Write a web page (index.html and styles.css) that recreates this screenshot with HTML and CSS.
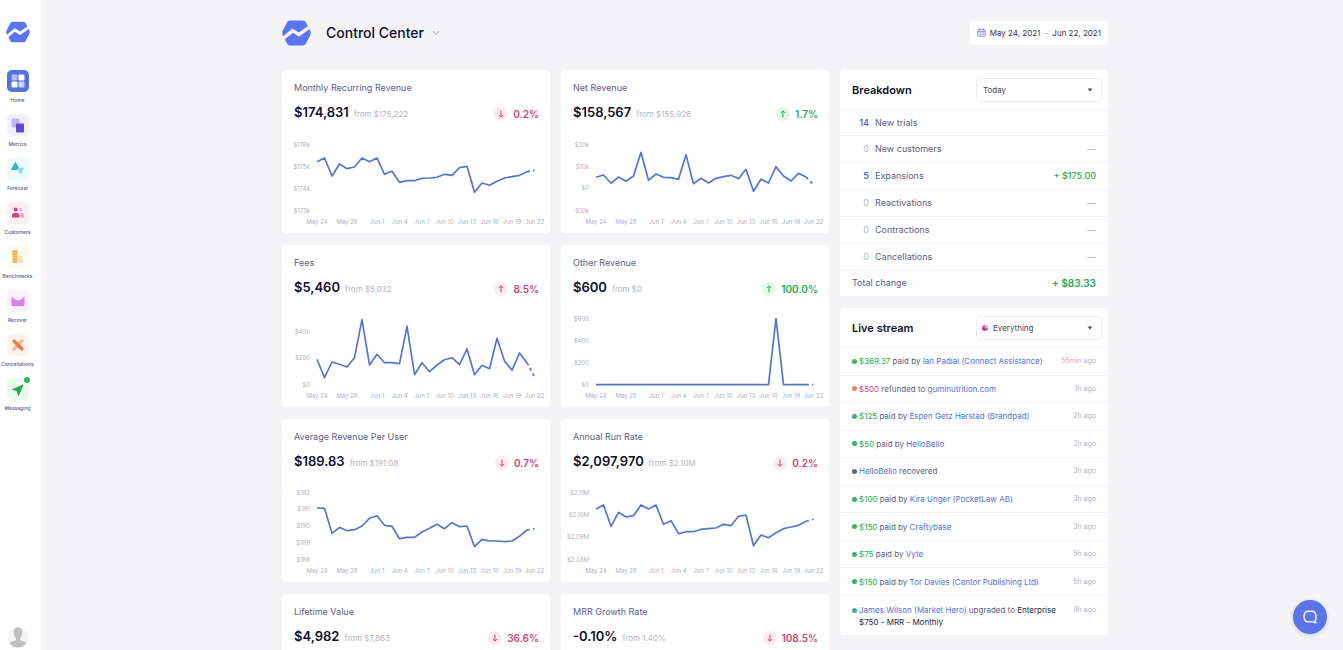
FILE: index.html
```html
<!DOCTYPE html>
<html lang="en">
<head>
<meta charset="utf-8">
<title>Control Center</title>
<link rel="stylesheet" href="styles.css">
</head>
<body>
<svg class="defs" aria-hidden="true">
  <symbol id="logo" viewBox="0 0 28 25">
    <path d="M8 2.500h12q1 0 1.500.900l4 7.900q.6 1.200 0 2.400l-4 7.900q-.5.900-1.500.900H8q-1 0-1.500-.900l-4-7.900q-.6-1.200 0-2.400l4-7.900q.5-.900 1.500-.900z" fill="#5b75f0" stroke="#5b75f0" stroke-width="4" stroke-linejoin="round"/>
    <path d="M-1 19.500 10.300 10.200 16.300 14 29.500 4.600" fill="none" stroke="var(--cut)" stroke-width="3.300" stroke-linejoin="round"/>
  </symbol>
  <symbol id="down" viewBox="0 0 14 14"><path d="M7 3.500v6.500M4.800 8 7 10.200 9.200 8" fill="none" stroke="currentColor" stroke-width="1"/></symbol>
  <symbol id="up" viewBox="0 0 14 14"><path d="M7 10.500V4M4.800 6 7 3.800 9.200 6" fill="none" stroke="currentColor" stroke-width="1"/></symbol>
  <symbol id="caret" viewBox="0 0 6 4"><path d="M.5.500h5L3 3.500z" fill="#4a4a68"/></symbol>
</svg>

<div class="app">
  <aside class="sidebar">
    <a class="brand" href="#" aria-label="Dashboard"><svg class="brand-logo"><use href="#logo"/></svg></a>
    <nav class="nav">
      <a class="nav-item" href="#"><svg class="nav-icon home" viewBox="0 0 22 22"><g fill="#fff"><rect x="4.500" y="4.500" width="6" height="6" rx="1" opacity=".55"/><rect x="11.500" y="4.500" width="6" height="6" rx="1"/><rect x="4.500" y="11.500" width="6" height="6" rx="1"/><rect x="11.500" y="11.500" width="6" height="6" rx="1" opacity=".7"/></g></svg>Home</a>
      <a class="nav-item" href="#"><svg class="nav-icon metrics" viewBox="0 0 22 22"><rect x="4.500" y="4.500" width="8" height="9" rx="1" fill="#c3b5ee"/><rect x="9" y="9.500" width="8" height="9" rx="1" fill="#6149cd"/></svg>Metrics</a>
      <a class="nav-item" href="#"><svg class="nav-icon forecast" viewBox="0 0 22 22"><path d="M8.500 4.500 12.500 11.500h-8z" fill="#39b3c4" stroke="#39b3c4" stroke-linejoin="round"/><path d="M10.500 11 16.500 10l-2.800 6z" fill="#8fd9e2" stroke="#8fd9e2" stroke-linejoin="round"/></svg>Forecast</a>
      <a class="nav-item" href="#"><svg class="nav-icon customers" viewBox="0 0 22 22"><g fill="#d2417d"><circle cx="8.700" cy="7.500" r="2"/><path d="M5 15.500v-2q0-2.500 2.500-2.500H10q2.500 0 2.500 2.500v2z"/></g><g fill="#ee9dbd"><circle cx="13.700" cy="7.500" r="1.500"/><path d="M13.500 11h1.300q2 0 2 2v2.500h-3.300z"/></g></svg>Customers</a>
      <a class="nav-item" href="#"><svg class="nav-icon benchmarks" viewBox="0 0 22 22"><rect x="5.500" y="4" width="5" height="13" rx="1" fill="#f2bb55"/><rect x="11.500" y="9.500" width="4" height="7.500" rx="1" fill="#f9dda5"/></svg>Benchmarks</a>
      <a class="nav-item" href="#"><svg class="nav-icon recover" viewBox="0 0 22 22"><path d="M4.500 6.500 8 9.500q3 2 6 0l3.500-3V15q0 1-1 1h-11q-1 0-1-1z" fill="#d880ee"/></svg>Recover</a>
      <a class="nav-item" href="#"><svg class="nav-icon cancel" viewBox="0 0 22 22"><path d="m15 7-8 8" stroke="#f6b690" stroke-width="3.200" stroke-linecap="round"/><path d="m7 7 8 8" stroke="#ea7a42" stroke-width="3.200" stroke-linecap="round"/></svg>Cancellations</a>
      <a class="nav-item" href="#"><svg class="nav-icon messaging" viewBox="0 0 22 22"><path d="M5.500 11.500 16 7 11.500 17.500l-1.300-4.700z" fill="#2ba551" stroke="#2ba551" stroke-linejoin="round" stroke-width=".8"/></svg><span class="nav-dot"></span>Messaging</a>
    </nav>
    <a class="avatar" href="#" aria-label="Account"><svg viewBox="0 0 22 22"><circle cx="11" cy="11" r="10.500" fill="#f5f5f6"/><path d="M11 1.500c3 0 4.300 2.200 4.300 4.800 0 2.200-.8 4.600-2.200 5.800v2.200c2 .6 5.500 1.500 6.300 3.300-2 2.600-5 3.900-8.400 3.900s-6.400-1.300-8.400-3.900c.8-1.800 4.300-2.700 6.300-3.300v-2.200C7.500 10.900 6.700 8.500 6.700 6.300c0-2.600 1.300-4.800 4.300-4.800z" fill="#bfbfc1"/></svg></a>
  </aside>

  <main class="main">
    <div class="page">
      <header class="header">
        <svg class="header-logo" aria-hidden="true"><use href="#logo"/></svg>
        <h1 class="page-title">Control Center</h1>
        <button class="switcher" type="button" aria-label="Switch dashboard"><svg viewBox="0 0 8 6"><path d="M1 1.200 4 4.300 7 1.200" fill="none" stroke="#c3c3d0" stroke-width="1.300"/></svg></button>
        <button class="dates" type="button"><svg class="dates-icon" viewBox="0 0 9 9"><rect x=".6" y="1.400" width="7.800" height="7" rx="1" fill="#e3dff2" stroke="#9a94bd" stroke-width=".8"/><path d="M.6 3.400h7.800M2.500.200v2M6.500.200v2" stroke="#9a94bd" stroke-width=".9"/><path d="M2 5h5M2 6.700h5" stroke="#b5b0d0" stroke-width=".7"/></svg><span>May 24, 2021</span><span class="dash">–</span><span>Jun 22, 2021</span></button>
      </header>

      <div class="columns">
        <section class="cards">
          <article class="card"><h2 class="card-title">Monthly Recurring Revenue</h2><div class="stat"><strong class="value">$174,831</strong><span class="from">from $175,222</span><span class="change bad"><svg class="arrow"><use href="#down"/></svg>0.2%</span></div><svg class="chart" data-chart="mrr"></svg></article>
          <article class="card"><h2 class="card-title">Net Revenue</h2><div class="stat"><strong class="value">$158,567</strong><span class="from">from $155,926</span><span class="change good"><svg class="arrow"><use href="#up"/></svg>1.7%</span></div><svg class="chart" data-chart="net"></svg></article>
          <article class="card"><h2 class="card-title">Fees</h2><div class="stat"><strong class="value">$5,460</strong><span class="from">from $5,032</span><span class="change bad"><svg class="arrow"><use href="#up"/></svg>8.5%</span></div><svg class="chart" data-chart="fees"></svg></article>
          <article class="card"><h2 class="card-title">Other Revenue</h2><div class="stat"><strong class="value">$600</strong><span class="from">from $0</span><span class="change good"><svg class="arrow"><use href="#up"/></svg>100.0%</span></div><svg class="chart" data-chart="other"></svg></article>
          <article class="card"><h2 class="card-title">Average Revenue Per User</h2><div class="stat"><strong class="value">$189.83</strong><span class="from">from $191.08</span><span class="change bad"><svg class="arrow"><use href="#down"/></svg>0.7%</span></div><svg class="chart" data-chart="arpu"></svg></article>
          <article class="card"><h2 class="card-title">Annual Run Rate</h2><div class="stat"><strong class="value">$2,097,970</strong><span class="from">from $2.10M</span><span class="change bad"><svg class="arrow"><use href="#down"/></svg>0.2%</span></div><svg class="chart" data-chart="arr"></svg></article>
          <article class="card"><h2 class="card-title">Lifetime Value</h2><div class="stat"><strong class="value">$4,982</strong><span class="from">from $7,863</span><span class="change bad"><svg class="arrow"><use href="#down"/></svg>36.6%</span></div></article>
          <article class="card"><h2 class="card-title">MRR Growth Rate</h2><div class="stat"><strong class="value">-0.10%</strong><span class="from">from 1.40%</span><span class="change bad"><svg class="arrow"><use href="#down"/></svg>108.5%</span></div></article>
        </section>

        <div class="side">
          <section class="panel">
            <div class="panel-head">
              <h2 class="panel-title"><label for="period">Breakdown</label></h2>
              <div class="picker"><select id="period" class="select"><option>Today</option></select><svg class="caret"><use href="#caret"/></svg></div>
            </div>
            <table class="breakdown">
              <tr><td class="count on">14</td><td class="kind">New trials</td><td class="sum"></td></tr>
              <tr><td class="count">0</td><td class="kind">New customers</td><td class="sum">—</td></tr>
              <tr><td class="count on">5</td><td class="kind">Expansions</td><td class="sum plus">+ $175.00</td></tr>
              <tr><td class="count">0</td><td class="kind">Reactivations</td><td class="sum">—</td></tr>
              <tr><td class="count">0</td><td class="kind">Contractions</td><td class="sum">—</td></tr>
              <tr><td class="count">0</td><td class="kind">Cancellations</td><td class="sum">—</td></tr>
              <tr class="total"><td class="total-label" colspan="2">Total change</td><td class="sum plus">+ $83.33</td></tr>
            </table>
          </section>

          <section class="panel">
            <div class="panel-head">
              <h2 class="panel-title"><label for="stream">Live stream</label></h2>
              <div class="picker"><select id="stream" class="select with-icon"><option>Everything</option></select><svg class="picker-icon" viewBox="0 0 6 6"><circle cx="3" cy="3" r="3" fill="#e04f8a"/><path d="M3 3V0a3 3 0 0 1 3 3z" fill="#f3b8cf"/><path d="M3 3v3a3 3 0 0 1-3-3z" fill="#8a4fd0"/></svg><svg class="caret"><use href="#caret"/></svg></div>
            </div>
            <ul class="stream">
              <li class="event paid"><p class="what"><b>$369.37</b> paid by <a href="#">Ian Padial (Connect Assistance)</a></p><time>55min ago</time></li>
              <li class="event refund"><p class="what"><b>$500</b> refunded to <a href="#">guminutrition.com</a></p><time>1h ago</time></li>
              <li class="event paid"><p class="what"><b>$125</b> paid by <a href="#">Espen Getz Harstad (Brandpad)</a></p><time>2h ago</time></li>
              <li class="event paid"><p class="what"><b>$50</b> paid by <a href="#">HelloBello</a></p><time>3h ago</time></li>
              <li class="event recovered"><p class="what"><a href="#">HelloBello</a> recovered</p><time>3h ago</time></li>
              <li class="event paid"><p class="what"><b>$100</b> paid by <a href="#">Kira Unger (PocketLaw AB)</a></p><time>3h ago</time></li>
              <li class="event paid"><p class="what"><b>$150</b> paid by <a href="#">Craftybase</a></p><time>3h ago</time></li>
              <li class="event paid"><p class="what"><b>$75</b> paid by <a href="#">Vyte</a></p><time>5h ago</time></li>
              <li class="event paid"><p class="what"><b>$150</b> paid by <a href="#">Tor Davies (Centor Publishing Ltd)</a></p><time>5h ago</time></li>
              <li class="event upgrade"><p class="what"><a href="#">James Wilson (Market Hero)</a> upgraded to <span class="plan">Enterprise<br>$750 - MRR - Monthly</span></p><time>9h ago</time></li>
            </ul>
          </section>
        </div>
      </div>
    </div>
  </main>
</div>
<button class="chat" type="button" aria-label="Open chat"><svg viewBox="0 0 16 14"><path d="M6.500 1.200h3.300q4.200 0 4.200 5.200 0 2.600-.9 3.900l.8 2.500-3.200-.9H6.500Q2 11.900 2 6.500t4.500-5.300z" fill="none" stroke="#fff" stroke-width="1.400" stroke-linejoin="round"/></svg></button>
<script src="charts.js"></script>
</body>
</html>
```

FILE: styles.css
```css
* { box-sizing: border-box; }
body {
  margin: 0;
  background: #f4f4f7;
  color: #0f0f2d;
  font-family: Inter, "Liberation Sans", sans-serif;
  font-size: 9px;
  line-height: 12px;
}
h1, h2, p, ul { margin: 0; padding: 0; }
a { color: inherit; text-decoration: none; }
button, select { font: inherit; color: inherit; }
svg { display: block; }
.defs { position: absolute; width: 0; height: 0; }

.app { display: flex; height: 100vh; overflow: hidden; }

/* Sidebar */
.sidebar {
  --cut: #fff;
  flex: none;
  width: 47px;
  padding: 20px 6px 2px 0;
  display: flex;
  flex-direction: column;
  align-items: center;
  background: #fff;
  border-right: 6px solid #f6f6f8;
}
.brand-logo { width: 24px; height: 24px; }
.nav {
  margin-top: 26px;
  display: flex;
  flex-direction: column;
  align-items: center;
  gap: 10px;
}
.nav-item {
  position: relative;
  width: 35px;
  display: flex;
  flex-direction: column;
  align-items: center;
  gap: 4px;
  font-size: 5px;
  line-height: 8px;
  font-weight: 500;
  color: #5b5b85;
}
.nav-icon { width: 22px; height: 22px; border-radius: 5px; }
.home { background: #5570e0; }
.metrics { background: #f3f0fc; }
.forecast { background: #eefafc; }
.customers { background: #fdeef3; }
.benchmarks { background: #fef9ee; }
.recover { background: #fbf0fe; }
.cancel { background: #fef2ed; }
.messaging { background: #e9f9ee; }
.nav-dot {
  position: absolute;
  top: -1px;
  right: 5px;
  width: 6px;
  height: 6px;
  border-radius: 50%;
  background: #34b35c;
}
.avatar { margin-top: auto; width: 22px; }

/* Page */
.main { --cut: #f4f4f7; flex: 1; padding: 20px 0 0; overflow: hidden; }
.page { max-width: 826px; margin: 0 auto; }
.header { display: flex; align-items: center; height: 25px; margin-bottom: 25px; }
.header-logo { width: 29px; height: 26px; margin-right: 15px; }
.page-title { font-size: 14px; line-height: 20px; font-weight: 500; }
.switcher { margin-left: 8px; padding: 0; border: 0; background: none; }
.switcher svg { width: 8px; height: 6px; }
.dates {
  margin-left: auto;
  height: 24px;
  padding: 0 7px;
  display: flex;
  align-items: center;
  gap: 4px;
  border: 0;
  border-radius: 4px;
  background: #fff;
  font-size: 8px;
  color: #33334f;
}
.dates-icon { width: 9px; height: 9px; }
.dash { color: #b4b4c5; }

.columns {
  display: grid;
  grid-template-columns: minmax(0, 547fr) minmax(0, 268fr);
  gap: 11px;
  align-items: start;
}
.cards { display: grid; grid-template-columns: 1fr 1fr; gap: 12px 11px; }
.card { background: #fff; border-radius: 4px; padding-top: 11px; min-height: 162px; }
.card-title { padding: 0 12px; font-size: 9px; line-height: 13px; font-weight: 400; color: #5d5d88; }
.stat { display: flex; align-items: center; height: 20px; margin: 8px 0; padding: 0 11px 0 12px; }
.value { font-size: 13px; font-weight: 600; }
.from { margin-left: 5px; padding-top: 3px; font-size: 8px; color: #b3b3c8; }
.change {
  margin-left: auto;
  padding-top: 4px;
  display: flex;
  align-items: center;
  gap: 5px;
  font-size: 10px;
  font-weight: 600;
}
.arrow { width: 14px; height: 14px; border-radius: 50%; }
.bad { color: #cc3f78; }
.bad .arrow { background: #fdebf2; }
.good { color: #25ab4c; }
.good .arrow { background: #e2f8e8; }
.chart { width: 100%; }
.chart text { font-size: 6px; fill: #b0b0c6; }
.chart .tick-y { text-anchor: end; }
.chart .tick-x { text-anchor: middle; }
.chart .line { fill: none; stroke: #5776ca; stroke-width: 1.7; stroke-linejoin: round; }
.chart .projected { stroke-dasharray: 3 3; }

/* Side panels */
.side { display: grid; gap: 12px; }
.panel { background: #fff; border-radius: 4px; overflow: hidden; }
.panel-head {
  height: 40px;
  padding: 0 6px 0 12px;
  display: flex;
  align-items: center;
  justify-content: space-between;
  border-bottom: 1px solid #f3f3f7;
}
.panel-title { font-size: 11px; line-height: 16px; font-weight: 600; }
.picker { position: relative; width: 126px; }
.select {
  display: block;
  width: 100%;
  height: 24px;
  padding: 0 6px;
  appearance: none;
  border: 1px solid #ebebf1;
  border-radius: 4px;
  background: #fff;
  font-size: 8px;
  color: #3f3f5c;
}
.with-icon { padding-left: 16px; }
.picker-icon { position: absolute; left: 6px; top: 9px; width: 6px; height: 6px; pointer-events: none; }
.caret { position: absolute; right: 9px; top: 10px; width: 6px; height: 4px; pointer-events: none; }

.breakdown { width: 100%; height: 186px; border-collapse: collapse; color: #5d5d88; }
.breakdown td { padding: 0; border-top: 1px solid #f3f3f7; }
.breakdown tr:first-child td { border-top: 0; }
.breakdown .count { width: 29px; text-align: right; color: #b7b7ce; }
.breakdown .on { color: #4a69d8; font-weight: 600; }
.breakdown .kind { padding-left: 6px; }
.breakdown .sum { padding-right: 12px; text-align: right; color: #b3b3c8; }
.breakdown .plus { color: #25ab4c; font-weight: 500; }
.breakdown .total-label { padding-left: 12px; }
.total { background: #fdfdfe; }
.total .plus { font-size: 10px; font-weight: 600; }

.stream { display: grid; grid-template-rows: repeat(9, 1fr) 39px; height: 287px; list-style: none; font-size: 8px; }
.event {
  padding: 0 12px;
  display: flex;
  align-items: center;
  border-bottom: 1px solid #f3f3f7;
  color: #5d5d80;
}
.event:last-child { border-bottom: 0; align-items: flex-start; padding-top: 8px; }
.event::before {
  content: "";
  flex: none;
  width: 5px;
  height: 5px;
  margin-right: 2px;
  border-radius: 50%;
  background: #3db362;
}
.event:last-child::before { margin-top: 4px; background: #43a9b8; }
.refund::before { background: #ee8353; }
.recovered::before { background: #66668c; }
.what b { font-weight: 400; color: #25ab4c; }
.refund .what b { color: #cc3f78; }
.what a { color: #5470db; }
.plan { color: #26263f; }
.event time { margin-left: auto; font-size: 7px; color: #b3b3c8; }

.chat {
  position: fixed;
  right: 16px;
  bottom: 16px;
  width: 34px;
  height: 34px;
  padding: 0;
  display: grid;
  place-items: center;
  border: 0;
  border-radius: 50%;
  background: #5975e8;
  box-shadow: 0 1px 4px rgba(40, 50, 110, .2);
}
.chat svg { width: 16px; height: 14px; }
```

FILE: charts.js
```javascript
// Levels and tick positions are drawing units measured down from the chart top, three to a pixel.
const CHARTS = {
  mrr: {
    height: 103, ticks: { "$176k": 44, "$175k": 110, "$174k": 175, "$173k": 241 },
    levels: [95,84,138,102,116,111,84,95,84,133,124,157,152,152,145,144,142,133,136,113,109,187,159,166,154,144,140,136,125,121]
  },
  net: {
    height: 103, ticks: { "$20k": 44, "$10k": 110, "$0": 174, "-$10k": 241 },
    levels: [142,135,160,141,154,138,67,151,132,142,143,148,74,161,145,159,145,140,136,146,118,184,148,159,110,138,153,130,141,164]
  },
  fees: {
    height: 102, ticks: { "$400": 81, "$200": 159, "$0": 238 },
    levels: [163,218,171,178,186,158,44,180,148,173,173,176,64,209,173,200,180,164,158,179,132,209,181,191,100,168,196,144,173,216]
  },
  other: {
    height: 102, ticks: { "$600": 41, "$400": 107, "$200": 174, "$0": 239 },
    levels: Array.from({ length: 30 }, (_, i) => (i === 24 ? 40 : 239))
  },
  arpu: {
    height: 103, ticks: { "$192": 40, "$191": 90, "$190": 139, "$189": 191, "$188": 241 },
    levels: [87,88,163,145,155,152,141,118,110,139,142,179,175,175,159,148,136,149,131,143,141,203,181,186,186,188,186,172,153,149]
  },
  arr: {
    height: 103, ticks: { "$2.11M": 41, "$2.10M": 107, "$2.09M": 174, "$2.08M": 241 },
    levels: [90,78,142,100,114,110,78,90,78,136,125,164,158,158,151,149,147,136,140,112,108,200,168,176,161,149,144,139,127,121]
  }
};
const DAYS = { 0: "May 24", 4: "May 28", 8: "Jun 1", 11: "Jun 4", 14: "Jun 7", 17: "Jun 10", 20: "Jun 13", 23: "Jun 16", 26: "Jun 19", 29: "Jun 22" };

const x = (day) => 35 + day * 7.5;

for (const svg of document.querySelectorAll("[data-chart]")) {
  const { height, ticks, levels } = CHARTS[svg.dataset.chart];
  const points = levels.map((level, day) => `${x(day)},${(level / 3).toFixed(1)}`);
  const yTicks = Object.entries(ticks).map(([label, at]) =>
    `<text class="tick-y" x="28" y="${Math.ceil(at / 3) + 2}">${label}</text>`);
  const xTicks = Object.entries(DAYS).map(([day, label]) =>
    `<text class="tick-x" x="${x(Number(day))}" y="${height - 9}">${label}</text>`);
  svg.setAttribute("viewBox", `0 0 268 ${height}`);
  svg.innerHTML = yTicks.join("") + xTicks.join("") +
    `<polyline class="line" points="${points.slice(0, 29).join(" ")}"/>` +
    `<polyline class="line projected" points="${points.slice(28).join(" ")}"/>`;
}
```
